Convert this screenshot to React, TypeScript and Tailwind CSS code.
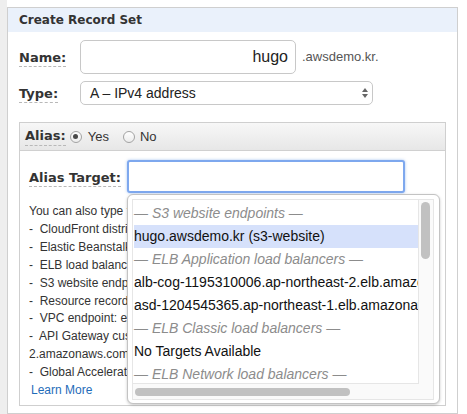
import React from "react";

type Option = { label: string; group?: boolean; active?: boolean };

const OPTIONS: Option[] = [
  { label: "— S3 website endpoints —", group: true },
  { label: "hugo.awsdemo.kr (s3-website)", active: true },
  { label: "— ELB Application load balancers —", group: true },
  { label: "alb-cog-1195310006.ap-northeast-2.elb.amazonaws.com" },
  { label: "asd-1204545365.ap-northeast-1.elb.amazonaws.com" },
  { label: "— ELB Classic load balancers —", group: true },
  { label: "No Targets Available" },
  { label: "— ELB Network load balancers —", group: true },
  { label: "No Targets Available" },
];

// help lines under the alias target; most of it sits behind the open dropdown
const HELP = [
  "You can also type the domain name for the resource. Examples:",
  "-  CloudFront distribution domain name: d111111abcdef8.cloudfront.net",
  "-  Elastic Beanstalk environment CNAME: example.elasticbeanstalk.com",
  "-  ELB load balancer DNS name: example-1.us-east-2.elb.amazonaws.com",
  "-  S3 website endpoint: s3-website.us-east-2.amazonaws.com",
  "-  Resource record set in this hosted zone: www.example.com",
  "-  VPC endpoint: example.us-east-2.vpce.amazonaws.com",
  "-  API Gateway custom regional API: d-abcde12345.execute-api.us-west-",
  "2.amazonaws.com",
  "-  Global Accelerator: a1234567890abcdef.awsglobalaccelerator.com",
];

function FieldLabel({ children }: { children: React.ReactNode }) {
  return (
    <span className="border-b border-dashed border-[#b8b8b8] pb-[1px] font-['DejaVu_Sans',Verdana,sans-serif] text-[13px] font-bold leading-[16px] text-[#333]">
      {children}
    </span>
  );
}

function Radio({ checked }: { checked?: boolean }) {
  return (
    <span className="flex size-[12px] items-center justify-center rounded-full border border-[#a3a3a3] bg-gradient-to-b from-white to-[#ececec]">
      {checked && <span className="size-[5px] rounded-full bg-[#4a4a4a]" />}
    </span>
  );
}

function TargetDropdown() {
  return (
    <div className="absolute left-0 top-[34px] z-10 h-[210px] w-[313px] rounded-[6px] border border-[#c3c3c3] bg-white pb-[3px] pl-[4px] pr-[5px] pt-[4px] shadow-[0_1px_3px_rgba(0,0,0,0.22)]">
      <div className="grid h-full grid-cols-[1fr_14px] grid-rows-[1fr_15px] border border-[#e6e6e6] bg-[#fafafa]">
        <ul className="overflow-hidden border-b border-r border-[#e6e6e6] bg-white pl-[1px] pt-[2px] text-[14px]">
          {OPTIONS.map((o, i) => (
            <li
              key={i}
              className={`flex h-[23px] items-center whitespace-nowrap ${
                o.group ? "italic text-[#8c8c8c]" : "text-[#111]"
              } ${o.active ? "bg-[#d6e1fb]" : ""}`}
            >
              {o.label}
            </li>
          ))}
        </ul>
        <div className="pl-[2px] pt-[2px]">
          <div className="h-[57px] w-[9px] rounded-full bg-[#c1c1c1]" />
        </div>
        <div className="pl-[2px] pt-[4px]">
          <div className="h-[8px] w-[215px] rounded-full bg-[#c1c1c1]" />
        </div>
        <div />
      </div>
    </div>
  );
}

export default function App() {
  return (
    <div className="flex h-[414px] w-[467px] overflow-hidden bg-white font-['Liberation_Sans',Arial,sans-serif] text-[#333]">
      <div className="w-[7px] shrink-0 bg-[#eeeeee]" />
      <section className="mt-[7px] w-[451px] shrink-0 border border-[#cfcfcf] bg-white">
        <header className="flex h-[24px] items-center bg-[#eaf1fb] px-[11px] font-['DejaVu_Sans',Verdana,sans-serif] text-[12px] font-bold text-[#333]">
          Create Record Set
        </header>

        <div className="px-[11px] pt-[8px]">
          <div className="flex h-[34px] items-center">
            <div className="w-[61px]">
              <FieldLabel>Name:</FieldLabel>
            </div>
            <div className="flex h-[34px] w-[216px] items-center justify-end rounded-[5px] border border-[#c8c8c8] pr-[7px] text-[16px] text-[#222]">
              hugo
            </div>
            <span className="ml-[6px] text-[13px] text-[#555]">.awsdemo.kr.</span>
          </div>

          <div className="mt-[7px] flex h-[24px] items-center">
            <div className="w-[61px]">
              <FieldLabel>Type:</FieldLabel>
            </div>
            <div className="flex h-[24px] w-[293px] items-center justify-between rounded-[5px] border border-[#c8c8c8] pl-[9px] pr-[3px] text-[14px] text-[#222]">
              <span>A – IPv4 address</span>
              <svg width="6" height="10" viewBox="0 0 6 10" className="mr-[1px]">
                <path d="M3 0 6 4H0z M0 6h6L3 10z" fill="#666" />
              </svg>
            </div>
          </div>

          <div className="mt-[17px] border border-[#cfcfcf]">
            <div className="flex h-[28px] items-center border-b border-[#d0d0d0] bg-gradient-to-b from-[#f7f7f7] to-[#e7e7e7] pl-[5px] text-[13px] text-[#333]">
              <FieldLabel>Alias:</FieldLabel>
              <span className="ml-[4px]">
                <Radio checked />
              </span>
              <span className="ml-[6px]">Yes</span>
              <span className="ml-[14px]">
                <Radio />
              </span>
              <span className="ml-[5px]">No</span>
            </div>

            <div className="pb-[5px] pl-[9px] pt-[9px]">
              <div className="flex h-[33px] items-center">
                <div className="w-[98px]">
                  <FieldLabel>Alias Target:</FieldLabel>
                </div>
                <div className="relative">
                  <div className="h-[33px] w-[278px] rounded-[3px] border-2 border-[#7ea8ee] bg-white shadow-[0_0_3px_rgba(90,145,230,0.55)]" />
                  <TargetDropdown />
                </div>
              </div>

              <div className="mt-[10px] w-[400px] overflow-hidden text-[12px] leading-[17.9px] text-[#333]">
                {HELP.map((line, i) => (
                  <div key={i} className="whitespace-pre">
                    {line}
                  </div>
                ))}
                <a className="ml-[2px] text-[#1f6cb9]">Learn More</a>
              </div>
            </div>
          </div>
        </div>
      </section>
    </div>
  );
}
